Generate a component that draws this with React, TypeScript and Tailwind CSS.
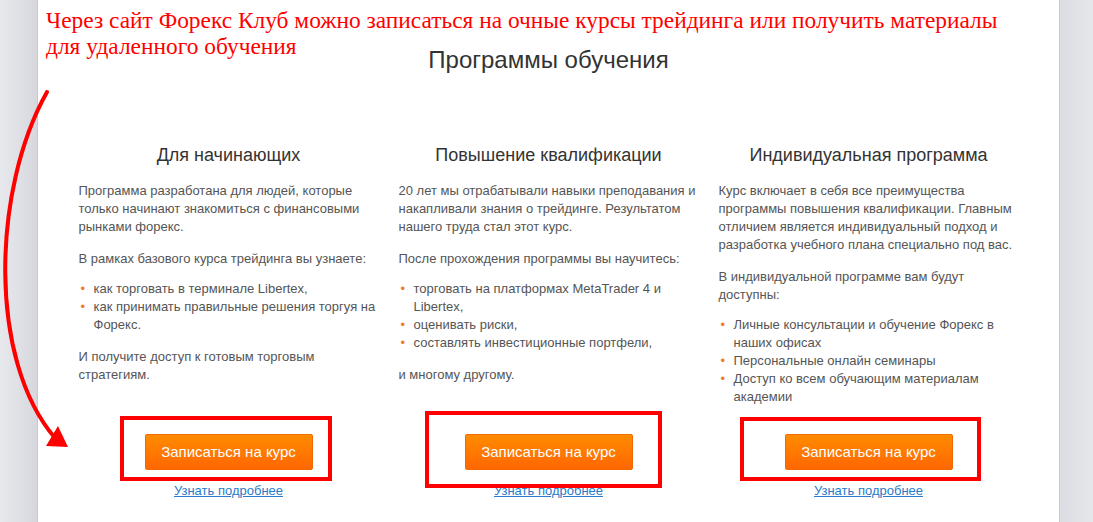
import type { ReactNode } from 'react'

type Program = {
  title: string
  intro: string[]
  lead: string
  items: string[]
  outro?: string
}

const programs: Program[] = [
  {
    title: 'Для начинающих',
    intro: ['Программа разработана для людей, которые только начинают знакомиться с финансовыми рынками форекс.'],
    lead: 'В рамках базового курса трейдинга вы узнаете:',
    items: ['как торговать в терминале Libertex,', 'как принимать правильные решения торгуя на Форекс.'],
    outro: 'И получите доступ к готовым торговым стратегиям.',
  },
  {
    title: 'Повышение квалификации',
    intro: ['20 лет мы отрабатывали навыки преподавания и накапливали знания о трейдинге. Результатом нашего труда стал этот курс.'],
    lead: 'После прохождения программы вы научитесь:',
    items: ['торговать на платформах MetaTrader 4 и Libertex,', 'оценивать риски,', 'составлять инвестиционные портфели,'],
    outro: 'и многому другому.',
  },
  {
    title: 'Индивидуальная программа',
    intro: ['Курс включает в себя все преимущества программы повышения квалификации. Главным отличием является индивидуальный подход и разработка учебного плана специально под вас.'],
    lead: 'В индивидуальной программе вам будут доступны:',
    items: ['Личные консультации и обучение Форекс в наших офисах', 'Персональные онлайн семинары', 'Доступ ко всем обучающим материалам академии'],
  },
]

function Bullet({ children }: { children: ReactNode }) {
  return (
    <li className="relative pl-[15px]">
      <span className="absolute left-[2px] top-0 text-[#f47a1f]">•</span>
      {children}
    </li>
  )
}

function ProgramColumn({ program }: { program: Program }) {
  return (
    <div className="flex w-[320px] flex-col px-[10px]">
      <h3 className="text-center text-[18px] leading-[24px] text-[#333]">{program.title}</h3>
      <div className="mt-[15px] h-[252px] text-[13px] leading-[18px] text-[#555]">
        {program.intro.map(p => (
          <p key={p}>{p}</p>
        ))}
        <p className="mt-[14px]">{program.lead}</p>
        <ul className="mt-[12px]">
          {program.items.map(item => (
            <Bullet key={item}>{item}</Bullet>
          ))}
        </ul>
        {program.outro && <p className="mt-[14px]">{program.outro}</p>}
      </div>
      <button
        type="button"
        className="mx-auto h-[36px] w-[168px] rounded-[2px] border border-[#f06a00] bg-gradient-to-b from-[#ff8b00] to-[#ff6600] text-[15px] text-white"
      >
        Записаться на курс
      </button>
      <a href="#" className="mt-[13px] text-center text-[13px] leading-[16px] text-[#2b7bc9] underline">
        Узнать подробнее
      </a>
    </div>
  )
}

export default function App() {
  return (
    <div className="relative flex h-[522px] w-full overflow-hidden bg-white" style={{ fontFamily: '"Liberation Sans", Arial, sans-serif' }}>
      <div className="w-[38px] shrink-0 border-r border-[#c4c8d0] bg-gradient-to-r from-[#e8e9ed] to-[#d6d8de]" />
      <main className="flex-1 bg-white">
        <h2 className="mt-[45px] text-center text-[24px] leading-[30px] text-[#333]">Программы обучения</h2>
        <div className="mt-[68px] flex justify-center">
          {programs.map(p => (
            <ProgramColumn key={p.title} program={p} />
          ))}
        </div>
      </main>
      <div className="w-[34px] shrink-0 border-l border-[#c6cad1] bg-gradient-to-r from-[#dcdde2] to-[#e6e7eb]" />

      {/* annotation overlay */}
      <p
        className="absolute left-[46px] top-[7px] whitespace-nowrap text-[23.4px] leading-[26px] text-[#ff0000]"
        style={{ fontFamily: '"Liberation Serif", "Times New Roman", serif' }}
      >
        Через сайт Форекс Клуб можно записаться на очные курсы трейдинга или получить материалы
        <br />
        для удаленного обучения
      </p>
      <svg className="pointer-events-none absolute left-0 top-0" width="1093" height="522">
        <path d="M47 92 C -8 190, -12 360, 55 438" fill="none" stroke="#ff0000" strokeWidth="4" strokeLinecap="round" />
        <polygon points="68,447 46,446 58,426" fill="#ff0000" />
      </svg>
      <div className="pointer-events-none absolute left-[120px] top-[416px] h-[65px] w-[212px] border-4 border-[#ff0000]" />
      <div className="pointer-events-none absolute left-[425px] top-[411px] h-[77px] w-[237px] border-4 border-[#ff0000]" />
      <div className="pointer-events-none absolute left-[740px] top-[417px] h-[64px] w-[241px] border-4 border-[#ff0000]" />
    </div>
  )
}
